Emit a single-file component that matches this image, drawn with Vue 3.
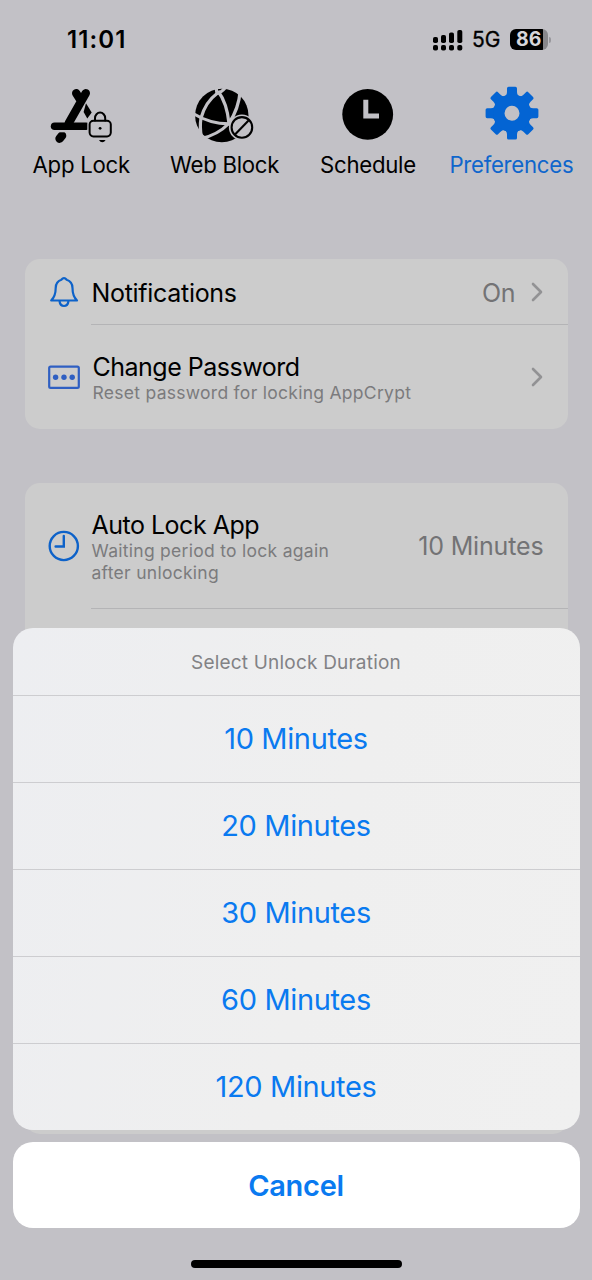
<script setup>
const durations = ['10 Minutes', '20 Minutes', '30 Minutes', '60 Minutes', '120 Minutes']
const gearTeeth = [0, 45, 90, 135, 180, 225, 270, 315]
</script>

<template>
  <div class="screen">
    <header class="status">
      <span class="time">11:01</span>
      <div class="indicators">
        <svg class="signal" viewBox="432 28 32 22" width="32" height="22">
          <rect x="433" y="36" width="5" height="6" rx="1.8" />
          <rect x="441" y="34" width="5" height="8" rx="1.8" />
          <rect x="449" y="31.5" width="5" height="10.5" rx="1.8" />
          <rect x="457.3" y="29" width="5" height="13" rx="1.8" />
          <rect x="433" y="44" width="5" height="5.6" rx="1.8" />
          <rect x="441" y="44" width="5" height="5.6" rx="1.8" />
          <rect x="449" y="44" width="5" height="5.6" rx="1.8" />
          <rect x="457.3" y="44" width="5" height="5.6" rx="1.8" />
        </svg>
        <span class="network">5G</span>
        <div class="battery"><span>86</span></div>
        <i class="battery-tip"></i>
      </div>
    </header>

    <nav class="tabs">
      <div class="tab">
        <svg viewBox="45 82 72 66" width="72" height="66" fill="none" stroke="#000" stroke-linecap="round">
          <path d="M85.8 93.200 68.800 123M76.200 93.200l4.400 7" stroke-width="8.400" />
          <path d="M54.6 126.2H86" stroke-width="7.6" />
          <path d="M62 135.600l-2.400 3" stroke-width="8.600" />
          <path d="M53 131.300h18" stroke="#c2c1c6" stroke-width="2" stroke-linecap="butt" />
          <path d="M86 103.200l5.700 9.200-4.400 6-3.700-6.400z" fill="#000" stroke="none" />
          <rect x="87.3" y="118.3" width="26" height="20" rx="5.5" fill="#c2c1c6" stroke="none" />
          <rect x="89.6" y="120.8" width="21.2" height="15.6" rx="3.8" stroke-width="2" />
          <path d="M95 120.6v-2.4a5.1 5.6 0 0 1 10.2 0v2.4" stroke-width="2" />
          <circle cx="100.1" cy="128.3" r="1.4" fill="#000" stroke="none" />
          <path d="M99 140h6.6q-1.3 2.2-3.3 2.2T99 140z" fill="#000" stroke="none" />
        </svg>
        <span>App Lock</span>
      </div>
      <div class="tab">
        <svg viewBox="188.5 82 72 66" width="72" height="66" fill="none">
          <circle cx="221.3" cy="115.5" r="26.7" fill="#000" />
          <g stroke="#c2c1c6" stroke-width="3.2">
            <path d="M215.500 87l1 6.500Q205 102 200.500 118q-1.500 9 .5 20" />
            <path d="M217.500 91q9 12 11 32.500M215.500 93.500q5-.5 9-5.500" />
            <path d="M239.800 90q-1.500 19-11.500 33.500-11 11.500-29 15.500" />
            <path d="M192.500 113.500q17 10.500 37 10.300" />
          </g>
          <circle cx="241.4" cy="127.4" r="13" fill="#c2c1c6" />
          <circle cx="241.4" cy="127.4" r="10.3" stroke="#000" stroke-width="2.1" />
          <path d="m234.5 134.5 13.8-14.2" stroke="#000" stroke-width="2.1" />
        </svg>
        <span>Web Block</span>
      </div>
      <div class="tab">
        <svg viewBox="331.5 82 72 66" width="72" height="66" fill="none">
          <circle cx="367.2" cy="114.4" r="25.4" fill="#000" />
          <path d="M365.3 99.8v16.200H378.500" stroke="#c2c1c6" stroke-width="5" />
        </svg>
        <span>Schedule</span>
      </div>
      <div class="tab active">
        <svg viewBox="475 82 72 66" width="72" height="66">
          <g fill="#0364d3">
            <path
              v-for="angle in gearTeeth"
              :key="angle"
              :transform="`rotate(${angle} 512 113.2)`"
              d="M503 97q4-1 4-5v-3.6q0-1.6 1.6-1.6h6.8q1.6 0 1.6 1.6V92q0 4 4 5z"
            />
            <path fill-rule="evenodd" d="M512 94.2a19 19 0 1 0 0 38 19 19 0 1 0 0-38zm0 11.5a7.5 7.5 0 1 1 0 15 7.5 7.5 0 1 1 0-15z" />
          </g>
        </svg>
        <span>Preferences</span>
      </div>
    </nav>

    <main class="groups">
      <section class="card">
        <div class="row notifications">
          <svg class="icon" viewBox="46 274 36 36" width="36" height="36" fill="none" stroke="#0d62c9" stroke-width="2.2" stroke-linejoin="round">
            <path d="M51.2 300.500q4.500-4.500 4.500-12.500 0-6.200 5.600-8.200 2.700-3.400 5.400 0 5.800 2 5.800 8.200 0 8 4.500 12.500z" />
            <path d="M59.500 301q.6 5 4.500 5t4.500-5" />
          </svg>
          <span class="title">Notifications</span>
          <span class="value">On</span>
          <svg class="chevron" viewBox="0 0 14 22" width="14" height="22"><path d="m3 3 8 8-8 8" /></svg>
        </div>
        <div class="row password">
          <svg class="icon" viewBox="46 359 36 36" width="36" height="36">
            <rect x="49.2" y="366.6" width="29.6" height="21.2" rx="1.4" fill="none" stroke="#2f5fc2" stroke-width="2.2" />
            <g fill="#2f5fc2"><circle cx="55.6" cy="377.3" r="2.7" /><circle cx="64" cy="377.3" r="2.7" /><circle cx="72.2" cy="377.3" r="2.7" /></g>
          </svg>
          <div class="copy">
            <div class="title">Change Password</div>
            <div class="note">Reset password for locking AppCrypt</div>
          </div>
          <svg class="chevron" viewBox="0 0 14 22" width="14" height="22"><path d="m3 3 8 8-8 8" /></svg>
        </div>
      </section>

      <section class="card long">
        <div class="row autolock">
          <svg class="icon" viewBox="46 528 36 36" width="36" height="36" fill="none" stroke="#0d62c9" stroke-width="2.4">
            <circle cx="63.8" cy="546" r="14.1" />
            <path d="M63.8 536v10.5H55.6" stroke-linecap="round" />
          </svg>
          <div class="copy">
            <div class="title">Auto Lock App</div>
            <div class="note">Waiting period to lock again<br />after unlocking</div>
          </div>
          <span class="value">10 Minutes</span>
        </div>
      </section>
    </main>

    <div class="overlay">
      <div class="sheet">
        <div class="heading">Select Unlock Duration</div>
        <div v-for="item in durations" :key="item" class="option"><span>{{ item }}</span></div>
      </div>
      <div class="cancel">Cancel</div>
      <div class="home"></div>
    </div>
  </div>
</template>

<style>
html,
body {
  margin: 0;
  background: #c2c1c6;
}
</style>

<style scoped>
.screen {
  position: relative;
  width: 592px;
  height: 1280px;
  overflow: hidden;
  background: #c2c1c6;
  color: #000;
  font-family: Inter, "Liberation Sans", sans-serif;
  box-sizing: border-box;
  white-space: nowrap;
}
.screen * {
  box-sizing: border-box;
}
.status {
  height: 82px;
  padding: 0 41px 2px 67px;
  display: flex;
  align-items: center;
  justify-content: space-between;
}
.time {
  font-size: 24px;
  font-weight: 600;
  letter-spacing: 1.1px;
  padding-bottom: 2px;
}
.indicators {
  display: flex;
  align-items: center;
  padding-bottom: 1px;
}
.network {
  margin-left: 8px;
  width: 38px;
  font-size: 21px;
  letter-spacing: -0.1px;
  -webkit-text-stroke: 0.3px #000;
}
.battery {
  width: 38px;
  height: 21px;
  border-radius: 6px;
  background: linear-gradient(90deg, #000 0 33px, #88878b 33px);
  color: #d6d5d9;
  font-size: 19.5px;
  font-weight: 700;
  line-height: 21px;
  padding-left: 6px;
}
.battery-tip {
  width: 2px;
  height: 6px;
  margin-left: 1px;
  border-radius: 0 2px 2px 0;
  background: #98979c;
}
.tabs {
  display: grid;
  grid-template-columns: repeat(4, 143.4px);
  padding-left: 9.5px;
  height: 177px;
}
.tab {
  display: flex;
  flex-direction: column;
  align-items: center;
  font-size: 22.2px;
  line-height: 34px;
  letter-spacing: -0.27px;
}
.tab svg {
  display: block;
}
.tab.active {
  color: #0f66cc;
}
.groups {
  padding: 0 24.5px;
  display: flex;
  flex-direction: column;
  gap: 54px;
}
.card {
  background: #cccccc;
  border-radius: 15px;
  height: 170px;
}
.card.long {
  height: 651px;
}
.row {
  position: relative;
  display: flex;
  align-items: center;
  padding: 0 24px 0 21px;
}
.row::after {
  content: "";
  position: absolute;
  left: 66.5px;
  right: 0;
  bottom: 0;
  height: 1px;
  background: #b4b4b6;
}
.password::after {
  display: none;
}
.notifications {
  height: 66px;
}
.password {
  height: 104px;
}
.autolock {
  height: 126px;
}
.icon {
  flex: none;
  margin-right: 10px;
}
.title {
  font-size: 25px;
  line-height: 30px;
  letter-spacing: -0.5px;
}
.notifications .title {
  letter-spacing: -0.3px;
}
.notifications .title,
.notifications .value {
  padding-top: 2px;
}
.copy {
  padding-top: 1px;
}
.password .copy {
  padding-top: 2px;
  padding-left: 1px;
}
.note {
  font-size: 17.5px;
  line-height: 22px;
  letter-spacing: 0.28px;
  color: #7b7b7d;
}
.value {
  margin-left: auto;
  font-size: 25px;
  letter-spacing: -0.15px;
  color: #737375;
}
.chevron {
  flex: none;
  fill: none;
  stroke: #929294;
  stroke-width: 2.6;
  stroke-linecap: round;
  stroke-linejoin: round;
}
.notifications .chevron {
  margin-left: 14px;
}
.password .chevron {
  margin-left: auto;
}
.overlay {
  position: absolute;
  inset: 628px 12px 0;
  display: flex;
  flex-direction: column;
  align-items: center;
}
.sheet {
  width: 567px;
  height: 502px;
  border-radius: 20px;
  background: linear-gradient(105deg, #edeef1 0, #efefef 55%, #f0f0f0);
  text-align: center;
}
.heading {
  height: 67px;
  line-height: 70px;
  font-size: 19px;
  letter-spacing: 0.2px;
  color: #828285;
}
.option {
  height: 87px;
  line-height: 86px;
  border-top: 1px solid #cdcdd0;
  font-size: 29px;
  letter-spacing: -0.36px;
  color: #0a7af0;
}
.cancel {
  width: 567px;
  height: 86px;
  margin-top: 12px;
  border-radius: 20px;
  background: #fff;
  color: #0a7af0;
  font-size: 29px;
  font-weight: 600;
  letter-spacing: -0.3px;
  line-height: 87px;
  text-align: center;
}
.home {
  width: 211px;
  height: 8px;
  margin-top: 32px;
  border-radius: 4px;
  background: #000;
}
</style>
